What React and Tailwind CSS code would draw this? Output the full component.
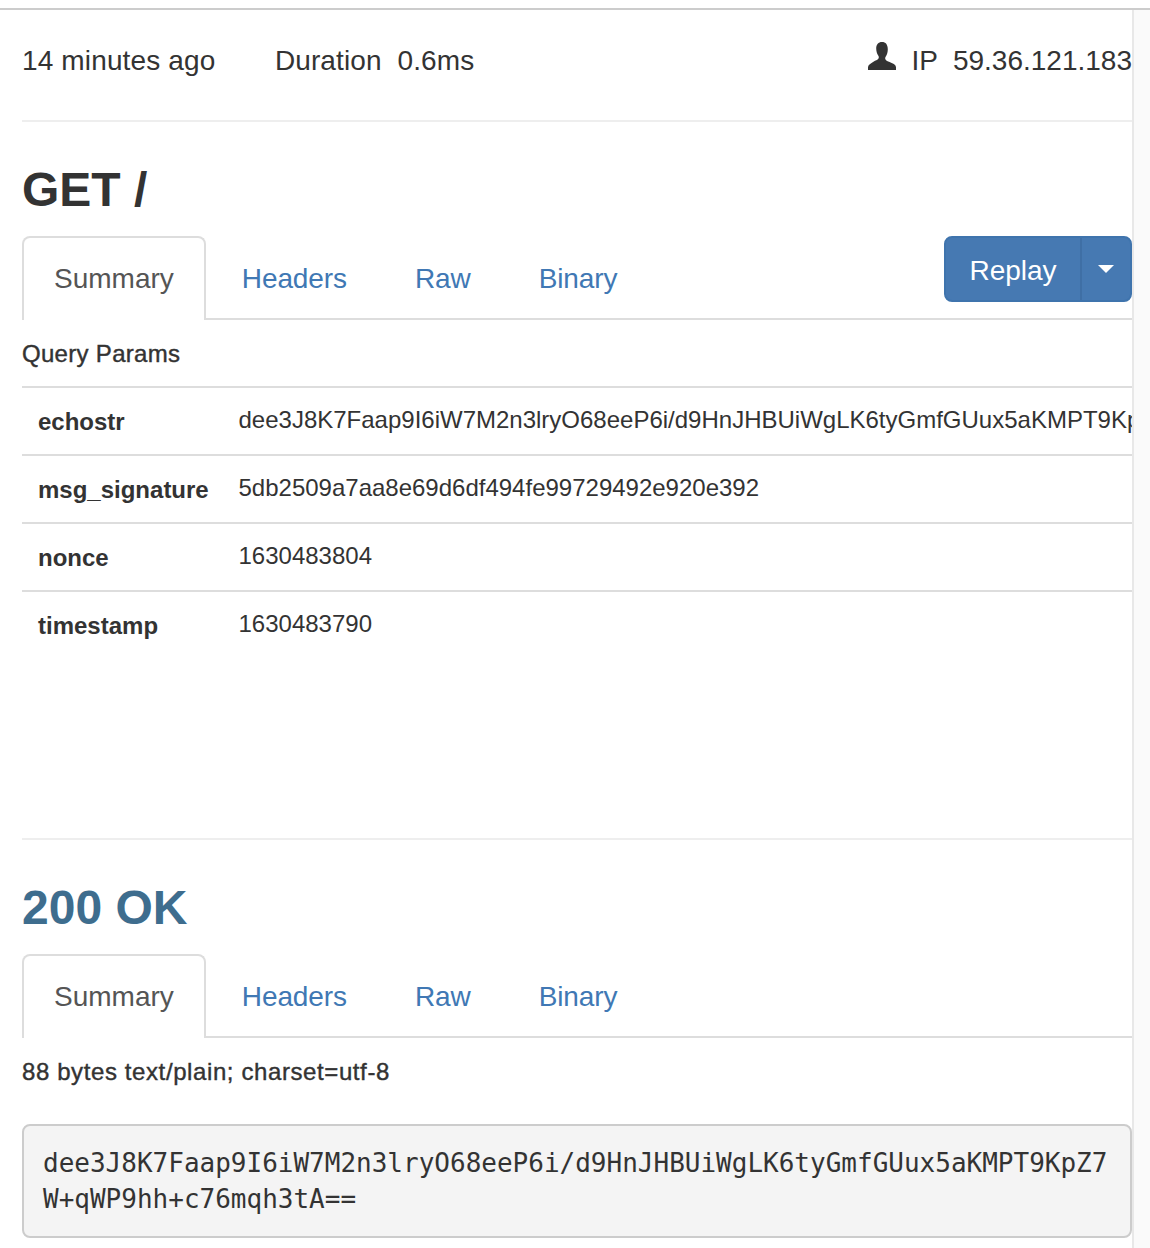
const sans = "font-['Liberation_Sans',Arial,sans-serif]";

function Tabs({ children }) {
  const links = ["Headers", "Raw", "Binary"];
  return (
    <div className="flex h-[84px] items-stretch border-b-2 border-[#ddd]">
      <div className="mb-[-2px] flex h-[84px] items-start rounded-t-lg border-2 border-b-0 border-[#ddd] bg-white px-[30px] pt-[21px] text-[28px] leading-[40px] text-[#555]">
        Summary
      </div>
      {links.map((label) => (
        <div key={label} className="ml-1 border-2 border-transparent px-[30px] pt-[21px] text-[28px] leading-[40px] tracking-[-0.1px] text-[#4078b4]">
          {label}
        </div>
      ))}
      <div className="flex-1" />
      {children}
    </div>
  );
}

const params = [
  ["echostr", "dee3J8K7Faap9I6iW7M2n3lryO68eeP6i/d9HnJHBUiWgLK6tyGmfGUux5aKMPT9KpZ7W+qWP9hh+c76mqh3tA=="],
  ["msg_signature", "5db2509a7aa8e69d6df494fe99729492e920e392"],
  ["nonce", "1630483804"],
  ["timestamp", "1630483790"],
];

export default function App() {
  return (
    <div className={`${sans} h-[1248px] overflow-hidden bg-white text-[#333]`}>
      <div className="h-[10px] border-b-2 border-[#ccc]" />
      <div className="flex h-[1238px]">
        <main className="min-w-0 flex-1 pl-[22px]">
          <div className="flex h-[112px] items-center border-b-2 border-[#eee] pb-[8px] text-[28px]">
            <span className="tracking-[0.14px]">14 minutes ago</span>
            <span className="ml-[59.5px] tracking-[0.1px]">Duration</span>
            <span className="ml-[16px] tracking-[0.1px]">0.6ms</span>
            <div className="flex-1" />
            <svg width="28" height="28" viewBox="0 0 28 28" className="mb-[10px] text-[#333]" fill="currentColor">
              <path d="M14 0c-3.700 0-5.800 2.500-5.800 6.300 0 2.900.7 5.400 2 7.300.7 1 .8 2 .3 3-.5.900-1.400 1.400-3.500 2.200C3 21.400.4 22.500 0 25v3h28v-3c-.4-2.500-3-3.600-7-5.200-2.100-.8-3-1.300-3.500-2.200-.5-1-.4-2 .3-3 1.300-1.900 2-4.400 2-7.300C19.800 2.500 17.700 0 14 0z" />
            </svg>
            <span className="ml-[15px]">IP</span>
            <span className="ml-[15px]">59.36.121.183</span>
          </div>

          <h1 className="mt-[40px] text-[48px] font-bold leading-[56px]">GET /</h1>
          <div className="mt-[18px]">
            <Tabs>
              <div className="flex h-[66px] w-[188px] overflow-hidden rounded-lg border-2 border-[#3f74ad] bg-[#4679b2] text-white">
                <div className="flex w-[134px] items-center justify-center pt-[4px] text-[28px]">Replay</div>
                <div className="flex flex-1 items-center justify-center border-l-2 border-[#3f6fa5]">
                  <div className="h-0 w-0 border-x-[8px] border-t-[8px] border-x-transparent border-t-white" />
                </div>
              </div>
            </Tabs>
          </div>

          <div className="flex h-[66px] items-center pt-[2px] text-[24px] tracking-[0.3px] [-webkit-text-stroke:0.4px_#333]">
            Query Params
          </div>
          <div className="overflow-hidden">
            {params.map(([k, v]) => (
              <div key={k} className="flex h-[68px] w-[1400px] border-t-2 border-[#ddd] text-[24px]">
                <div className="w-[216.5px] shrink-0 pl-[16px] pt-[18px] font-bold leading-[32px]">{k}</div>
                <div className="pt-[16px] leading-[32px]">{v}</div>
              </div>
            ))}
          </div>

          <div className="mt-[180px] border-t-2 border-[#eee]" />
          <h1 className="mt-[40px] text-[48px] font-bold leading-[56px] text-[#3e6d8e]">200 OK</h1>
          <div className="mt-[18px]">
            <Tabs />
          </div>
          <div className="flex h-[68px] items-center text-[24px] tracking-[0.6px] [-webkit-text-stroke:0.4px_#333]">
            88 bytes text/plain; charset=utf-8
          </div>
          <pre className="mt-[18px] h-[114px] rounded-lg border-2 border-[#ccc] bg-[#f4f4f4] px-[19px] py-[19px] font-['DejaVu_Sans_Mono',monospace] text-[26px] leading-[36px] text-[#333]">
            {"dee3J8K7Faap9I6iW7M2n3lryO68eeP6i/d9HnJHBUiWgLK6tyGmfGUux5aKMPT9KpZ7\nW+qWP9hh+c76mqh3tA=="}
          </pre>
        </main>
        <aside className="w-[18px] shrink-0 border-l-2 border-[#e8e8e8] bg-[#fafafa]" />
      </div>
    </div>
  );
}
